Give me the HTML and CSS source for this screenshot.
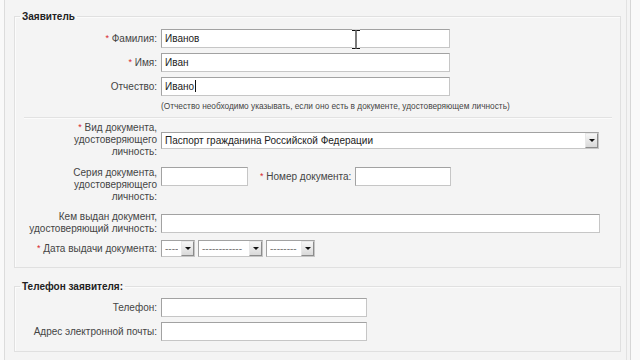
FILE: index.html
```html
<!DOCTYPE html>
<html lang="ru">
<head>
    <meta charset="UTF-8">
    <meta name="viewport" content="width=device-width, initial-scale=1.0">
    <title>Заявитель</title>
    <link rel="stylesheet" href="styles.css">
</head>
<body>
    <div class="page">
        <fieldset class="group first">
            <legend>Заявитель</legend>

            <div class="row">
                <label class="lbl"><span class="req">*</span> Фамилия:</label>
                <input class="txt w-name" type="text" value="Иванов">
            </div>
            <div class="row">
                <label class="lbl"><span class="req">*</span> Имя:</label>
                <input class="txt w-name" type="text" value="Иван">
            </div>
            <div class="row">
                <label class="lbl">Отчество:</label>
                <input class="txt w-name" type="text" value="Ивано">
            </div>
            <p class="hint">(Отчество необходимо указывать, если оно есть в документе, удостоверяющем личность)</p>

            <hr class="sep">

            <div class="row doc-type">
                <label class="lbl"><span class="req">*</span> Вид документа,<br>удостоверяющего<br>личность:</label>
                <span class="sel w-doc">
                    <select><option>Паспорт гражданина Российской Федерации</option></select>
                    <span class="btn"></span>
                </span>
            </div>
            <div class="row top series">
                <label class="lbl">Серия документа,<br>удостоверяющего<br>личность:</label>
                <input class="txt w-series" type="text">
                <label class="lbl-inline"><span class="req">*</span> Номер документа:</label>
                <input class="txt w-number" type="text">
            </div>
            <div class="row">
                <label class="lbl">Кем выдан документ,<br>удостоверяющий личность:</label>
                <input class="txt w-wide" type="text">
            </div>
            <div class="row last">
                <label class="lbl"><span class="req">*</span> Дата выдачи документа:</label>
                <span class="sel w-day">
                    <select><option>----</option></select>
                    <span class="btn"></span>
                </span>
                <span class="sel w-month">
                    <select><option>------------</option></select>
                    <span class="btn"></span>
                </span>
                <span class="sel w-year">
                    <select><option>--------</option></select>
                    <span class="btn"></span>
                </span>
            </div>
        </fieldset>

        <fieldset class="group second">
            <legend>Телефон заявителя:</legend>
            <div class="row">
                <label class="lbl">Телефон:</label>
                <input class="txt w-phone" type="text">
            </div>
            <div class="row last">
                <label class="lbl">Адрес электронной почты:</label>
                <input class="txt w-phone" type="text">
            </div>
        </fieldset>
    </div>

    <!-- mouse pointer and text caret from the capture -->
    <span class="caret"></span>
    <svg class="ibeam" width="10" height="21" viewBox="0 0 10 21">
        <path d="M1 1.5h3.5v18H1M9 1.5H5.5v18H9" fill="none" stroke="#fff" stroke-width="2.2"/>
        <path d="M1 1.5h3.5M5.5 1.5H9M5 1.5v18M1 19.5h3.5M5.5 19.5H9" fill="none" stroke="#111" stroke-width="1.1"/>
    </svg>
</body>
</html>
```

FILE: styles.css
```css
body {
    margin: 0;
    background-color: #f9f9f9;
    font-family: "Liberation Sans", Arial, sans-serif;
    font-size: 10px;
    color: #444;
}
.page {
    margin: 0 9px 0 4px;
    min-height: 360px;
    box-sizing: border-box;
    padding: 10px 9px 0 9px;
    background-color: #f4f4f4;
    border-left: 1px solid #dcdcdc;
    border-right: 1px solid #d6d6d6;
    box-shadow: inset -3px 0 0 #f4f4f4, inset -4px 0 0 #e2e2e2;
}
.group {
    margin: 0;
    border: 1px solid #e0e0e0;
    box-shadow: inset 1px 1px 0 #fbfbfb;
    min-width: 0;
}
.group legend {
    padding: 0 2px;
    font-weight: bold;
    font-size: 10px;
    line-height: 13px;
    color: #222;
}
.first {
    padding: 6px 5px 10px 5px;
}
.second {
    margin-top: 12px;
    padding: 5px 5px 10px 5px;
}
.row {
    display: flex;
    align-items: center;
    gap: 4px;
    margin-bottom: 5px;
}
.row.top {
    align-items: flex-start;
}
.row.last {
    margin-bottom: 0;
}
.doc-type {
    margin-bottom: 9px;
}
.series {
    margin-bottom: 8px;
}
.lbl {
    flex: none;
    width: 137px;
    text-align: right;
    line-height: 12px;
    color: #444;
}
.lbl-inline {
    margin-left: 8px;
    line-height: 19px;
    color: #444;
}
.req {
    position: relative;
    top: -1px;
    color: #d8262e;
    font-size: 9px;
}
.txt {
    box-sizing: border-box;
    height: 19px;
    margin: 0;
    padding: 0 3px;
    font-family: "Liberation Sans", Arial, sans-serif;
    font-size: 10px;
    color: #222;
    background-color: #fff;
    border: 1px solid;
    border-color: #a2a2a2 #c6c6c6 #c6c6c6 #a2a2a2;
    outline: none;
}
.w-name { width: 289px; }
.w-series { width: 87px; }
.w-number { width: 96px; }
.w-wide { width: 439px; }
.w-phone { width: 206px; }
.hint {
    margin: 0 0 0 141px;
    font-size: 8.3px;
    line-height: 11px;
    color: #444;
}
.sep {
    margin: 5px 3px 3px 4px;
    height: 0;
    border: none;
    border-top: 1px solid #e2e2e2;
    border-bottom: 1px solid #fbfbfb;
}
.sel {
    position: relative;
    display: inline-block;
    box-sizing: border-box;
    height: 17px;
    background-color: #fff;
    border: 1px solid;
    border-color: #a2a2a2 #c6c6c6 #c6c6c6 #a2a2a2;
}
.sel + .sel {
    margin-left: -1px;
}
.sel select {
    appearance: none;
    -webkit-appearance: none;
    display: block;
    width: 100%;
    height: 15px;
    margin: 0;
    padding: 0 16px 0 3px;
    border: none;
    background: transparent;
    font-family: "Liberation Sans", Arial, sans-serif;
    font-size: 10px;
    line-height: 15px;
    color: #222;
    outline: none;
}
.sel .btn {
    position: absolute;
    top: 0;
    right: 0;
    width: 13px;
    height: 15px;
    box-sizing: border-box;
    background: linear-gradient(#f6f6f6, #d9d9d9);
    border: 1px solid;
    border-color: #e8e8e8 #8c8c8c #8c8c8c #e8e8e8;
}
.sel .btn::after {
    content: "";
    position: absolute;
    left: 3px;
    top: 5px;
    border-left: 3px solid transparent;
    border-right: 3px solid transparent;
    border-top: 3px solid #111;
}
.w-doc { width: 438px; }
.w-day { width: 34px; }
.w-month { width: 65px; }
.w-year { width: 49px; }
.w-day select,
.w-month select,
.w-year select {
    color: #777;
}
.caret {
    position: absolute;
    left: 195px;
    top: 80px;
    width: 1px;
    height: 12px;
    background-color: #111;
}
.ibeam {
    position: absolute;
    left: 351px;
    top: 29px;
}
```
